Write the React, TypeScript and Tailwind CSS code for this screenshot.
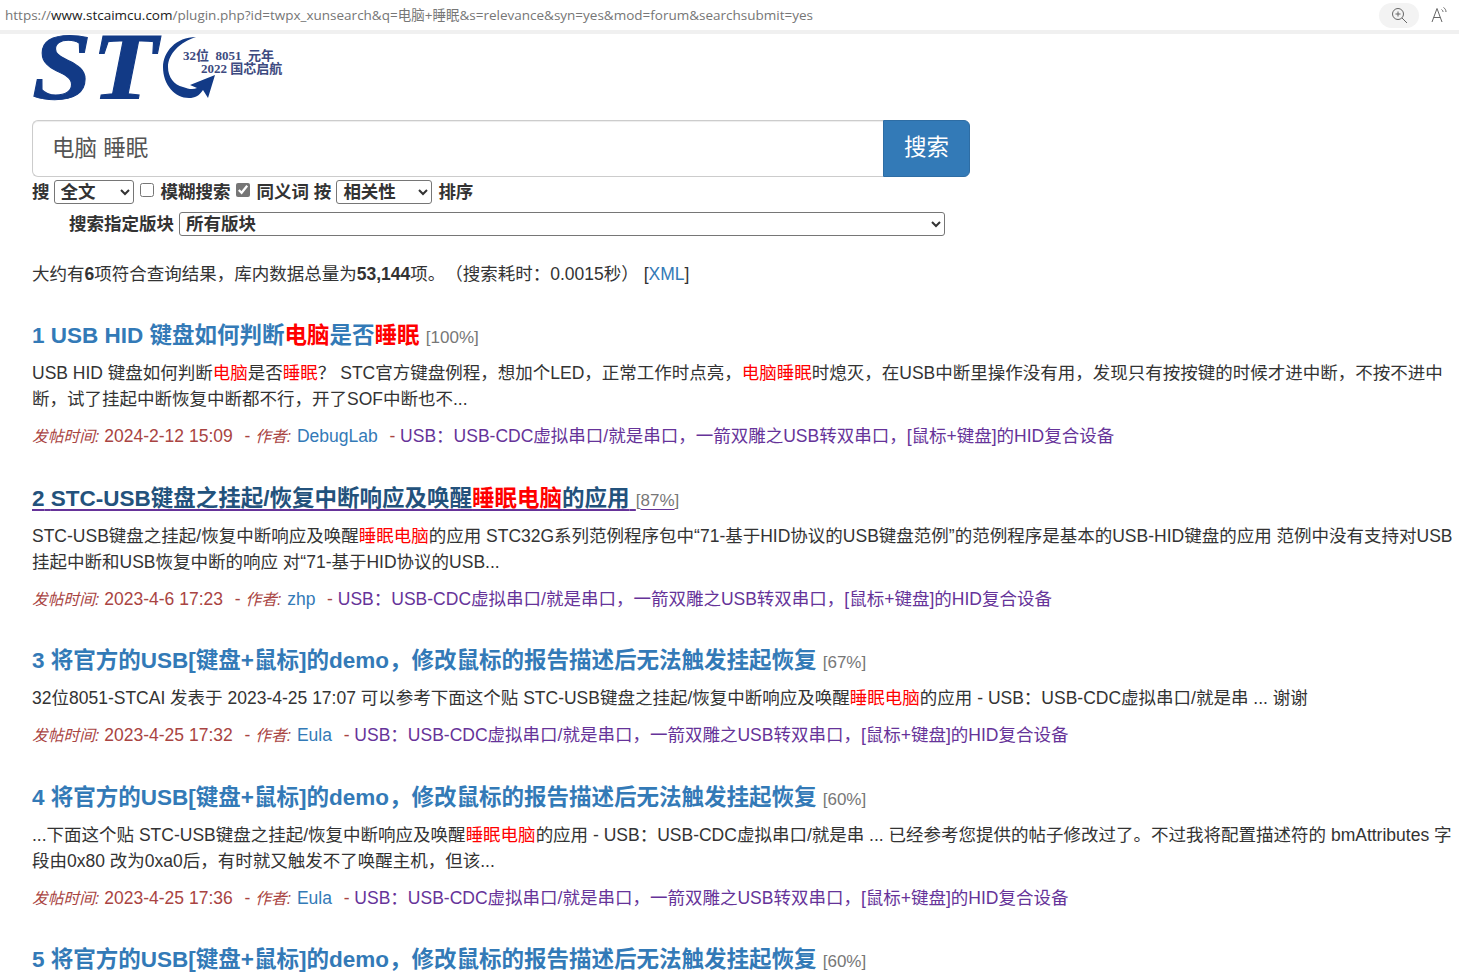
import React from "react";

const FONT = "[font-family:'Liberation_Sans','Noto_Sans_CJK_SC',sans-serif]";
const Hl = ({ children }: { children: React.ReactNode }) => <span className="text-[#f00]">{children}</span>;
const Forum = () => (
  <span className="text-[#639]">USB：USB-CDC虚拟串口/就是串口，一箭双雕之USB转双串口，[鼠标+键盘]的HID复合设备</span>
);

function Meta({ date, author }: { date: string; author: string }) {
  return (
    <p className="h-[26px] leading-[26px] whitespace-nowrap mt-[11px]">
      <i className="text-[#a94442] text-[15.75px]">发帖时间:</i>
      <span className="text-[#a94442]"> {date}</span>
      <span className="text-[#a94442] pl-[2px]">&nbsp; - </span>
      <i className="text-[#a94442] text-[15.75px]">作者:</i>
      <span className="text-[#337ab7] pl-[1px]"> {author}</span>
      <span className="text-[#a94442] pl-[2px]">&nbsp; - </span>
      <Forum />
    </p>
  );
}

function Title({ n, pct, children, hover }: { n: number; pct: string; children: React.ReactNode; hover?: boolean }) {
  return (
    <h2 className="h-[33px] leading-[33px] whitespace-nowrap text-[22.5px] font-bold">
      <span
        className={
          hover
            ? "text-[#23527c] underline decoration-[#639] decoration-2 underline-offset-[3px]"
            : "text-[#337ab7]"
        }
      >
        {n} {children}{" "}
      </span>
      <span className={`text-[17px] font-normal text-[#777] ${hover ? "underline decoration-[#639] underline-offset-[3px]" : ""}`}>[{pct}]</span>
    </h2>
  );
}

export default function App() {
  return (
    <div className={`${FONT} [text-spacing-trim:space-all] w-[1459px] h-[977px] overflow-hidden bg-white text-[17.5px] leading-[26px] text-[#333]`}>
      {/* browser address bar */}
      <div className="h-[34px] border-b-[4px] border-[#f0f0f0] flex items-center pl-[5px] pr-[10px] text-[13.5px] text-[#767676] [font-family:'Open_Sans','Noto_Sans_CJK_SC',sans-serif]">
        <span className="whitespace-nowrap">
          https://<span className="text-[#1a1a1a]">www.stcaimcu.com</span>/plugin.php?id=twpx_xunsearch&amp;q=电脑+睡眠&amp;s=relevance&amp;syn=yes&amp;mod=forum&amp;searchsubmit=yes
        </span>
        <div className="ml-auto flex items-center gap-[10px]">
          <div className="w-[40px] h-[25px] rounded-full bg-[#f3f3f3] flex items-center justify-center">
            <svg width="17" height="17" viewBox="0 0 17 17" fill="none" stroke="#666" strokeWidth="1">
              <circle cx="7" cy="7" r="5.5" />
              <path d="M7 4.5v5M4.5 7h5M11 11l5 5" />
            </svg>
          </div>
          <div className="w-[20px] h-[20px]">
            <svg width="20" height="20" viewBox="0 0 20 20" fill="none" stroke="#666" strokeWidth="1">
              <path d="M3 17L8 3.5 13 17M4.6 12.5h6.8" />
              <path d="M12.5 4.5c1 .6 1.5 1.5 1.5 2.5M14.5 2.5c1.6 1 2.5 2.6 2.5 4.5" />
            </svg>
          </div>
        </div>
      </div>

      <div className="pl-[32px] pr-[6px]">
        {/* logo */}
        <div className="relative h-[86px] w-[260px]">
          <div className="absolute left-0 top-[-10px] origin-left scale-x-[1.12] text-[96px] leading-[86px] font-bold italic text-[#123a86] [-webkit-text-stroke:1px_#123a86] [font-family:'Liberation_Serif',serif]">
            ST
          </div>
          <svg className="absolute left-[118px] top-[-4px]" width="70" height="75" viewBox="0 0 70 75">
            <path d="M46 7C26 7 13 22 13 37c0 18 12 31 26 31 6 0 10-2 14-8l5 8 7-23-25 10 7 3c-4 2-9 1-14-1C24 55 18 47 18 37 18 24 30 12 46 7z" fill="#123a86" />
          </svg>
          <div className="absolute left-[151px] top-[15px] text-[13px] leading-[14px] font-bold text-[#3d4a80] whitespace-nowrap [font-family:'Liberation_Serif','Noto_Sans_CJK_SC',serif]">
            32位&nbsp; 8051&nbsp; 元年
          </div>
          <div className="absolute left-[169px] top-[28px] text-[13px] leading-[14px] font-bold text-[#3d4a80] whitespace-nowrap [font-family:'Liberation_Serif','Noto_Sans_CJK_SC',serif]">
            2022 国芯启航
          </div>
        </div>

        {/* search box */}
        <div className="flex w-[938px] h-[57px]">
          <div className="flex-1 border border-[#ccc] border-r-0 rounded-l-[6px] shadow-[inset_0_1px_1px_rgba(0,0,0,0.075)] pl-[19px] flex items-center text-[22.5px] text-[#555]">
            电脑 睡眠
          </div>
          <button className="w-[87px] rounded-r-[6px] bg-[#337ab7] border border-[#2e6da4] text-white text-[22.5px] pb-[2px]">搜索</button>
        </div>

        {/* options */}
        <div className="h-[30px] flex items-center font-bold whitespace-nowrap">
          <span>搜</span>
          <select className="ml-[4px] w-[80px] h-[24px] border border-[#767676] rounded-[3px] text-[17.5px] font-bold pl-[2px] bg-white" defaultValue="全文">
            <option>全文</option>
          </select>
          <input type="checkbox" className="ml-[6px] mr-[7px] w-[14px] h-[14px] -mt-[4px]" />
          <span>模糊搜索</span>
          <input type="checkbox" defaultChecked className="ml-[5px] mr-[7px] w-[14px] h-[14px] -mt-[4px] accent-[#767676]" />
          <span>同义词 按</span>
          <select className="ml-[5px] w-[96px] h-[24px] border border-[#767676] rounded-[3px] text-[17.5px] font-bold pl-[2px] bg-white" defaultValue="相关性">
            <option>相关性</option>
          </select>
          <span className="ml-[6px]">排序</span>
        </div>
        <div className="h-[28px] pl-[37px] flex items-center font-bold whitespace-nowrap mt-[3px]">
          <span>搜索指定版块</span>
          <select className="ml-[5px] w-[766px] h-[24px] border border-[#767676] rounded-[3px] text-[17.5px] font-bold pl-[2px] bg-white" defaultValue="所有版块">
            <option>所有版块</option>
          </select>
        </div>

        {/* summary */}
        <p className="mt-[23px] h-[26px] whitespace-nowrap">
          大约有<b>6</b>项符合查询结果，库内数据总量为<b>53,144</b>项。（搜索耗时：0.0015秒） <span>[<span className="text-[#337ab7]">XML</span>]</span>
        </p>

        {/* results */}
        <div className="mt-[32px]">
          <Title n={1} pct="100%">
            USB HID 键盘如何判断<Hl>电脑</Hl>是否<Hl>睡眠</Hl>
          </Title>
          <p className="mt-[8px]">
            USB HID 键盘如何判断<Hl>电脑</Hl>是否<Hl>睡眠</Hl>？ STC官方键盘例程，想加个LED，正常工作时点亮，<Hl>电脑睡眠</Hl>时熄灭，在USB中断里操作没有用，发现只有按按键的时候才进中断，不按不进中断，试了挂起中断恢复中断都不行，开了SOF中断也不...
          </p>
          <Meta date="2024-2-12 15:09" author="DebugLab" />
        </div>

        <div className="mt-[32.5px]">
          <Title n={2} pct="87%" hover>
            STC-USB键盘之挂起/恢复中断响应及唤醒<Hl>睡眠电脑</Hl>的应用
          </Title>
          <p className="mt-[8px]">
            STC-USB键盘之挂起/恢复中断响应及唤醒<Hl>睡眠电脑</Hl>的应用 STC32G系列范例程序包中“71-基于HID协议的USB键盘范例”的范例程序是基本的USB-HID键盘的应用 范例中没有支持对USB挂起中断和USB恢复中断的响应 对“71-基于HID协议的USB...
          </p>
          <Meta date="2023-4-6 17:23" author="zhp" />
        </div>

        <div className="mt-[32.5px]">
          <Title n={3} pct="67%">
            将官方的USB[键盘+鼠标]的demo，修改鼠标的报告描述后无法触发挂起恢复
          </Title>
          <p className="mt-[8px] whitespace-nowrap">
            32位8051-STCAI 发表于 2023-4-25 17:07 可以参考下面这个贴 STC-USB键盘之挂起/恢复中断响应及唤醒<Hl>睡眠电脑</Hl>的应用 - USB：USB-CDC虚拟串口/就是串 ... 谢谢
          </p>
          <Meta date="2023-4-25 17:32" author="Eula" />
        </div>

        <div className="mt-[32.5px]">
          <Title n={4} pct="60%">
            将官方的USB[键盘+鼠标]的demo，修改鼠标的报告描述后无法触发挂起恢复
          </Title>
          <p className="mt-[8px]">
            ...下面这个贴 STC-USB键盘之挂起/恢复中断响应及唤醒<Hl>睡眠电脑</Hl>的应用 - USB：USB-CDC虚拟串口/就是串 ... 已经参考您提供的帖子修改过了。不过我将配置描述符的 bmAttributes 字段由0x80 改为0xa0后，有时就又触发不了唤醒主机，但该...
          </p>
          <Meta date="2023-4-25 17:36" author="Eula" />
        </div>

        <div className="mt-[32.5px]">
          <Title n={5} pct="60%">
            将官方的USB[键盘+鼠标]的demo，修改鼠标的报告描述后无法触发挂起恢复
          </Title>
        </div>
      </div>
    </div>
  );
}
